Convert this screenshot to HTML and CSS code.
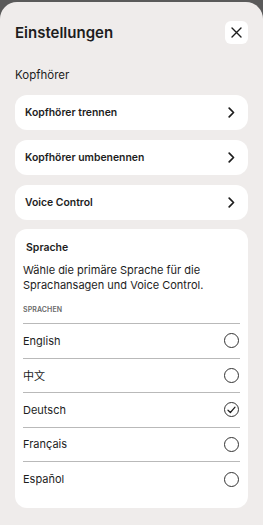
FILE: index.html
```html
<!DOCTYPE html>
<html lang="de">
<head>
<meta charset="utf-8">
<link rel="stylesheet" href="styles.css">
</head>
<body>
<div class="sheet">
  <header class="header">
    <h1 class="title">Einstellungen</h1>
    <button class="close" aria-label="Schließen">
      <svg width="11" height="11" viewBox="0 0 11 11"><path d="M1 1L10 10M10 1L1 10" stroke="#1d1d1d" stroke-width="1.4" stroke-linecap="round"/></svg>
    </button>
  </header>
  <h2 class="section">Kopfhörer</h2>
  <div class="menu">
    <div class="item"><span>Kopfhörer trennen</span><svg class="chev" width="7" height="11" viewBox="0 0 7 11"><path d="M1.2 1.2L5.5 5.5L1.2 9.8" fill="none" stroke="#1d1d1d" stroke-width="1.7" stroke-linecap="round" stroke-linejoin="round"/></svg></div>
    <div class="item"><span>Kopfhörer umbenennen</span><svg class="chev" width="7" height="11" viewBox="0 0 7 11"><path d="M1.2 1.2L5.5 5.5L1.2 9.8" fill="none" stroke="#1d1d1d" stroke-width="1.7" stroke-linecap="round" stroke-linejoin="round"/></svg></div>
    <div class="item"><span>Voice Control</span><svg class="chev" width="7" height="11" viewBox="0 0 7 11"><path d="M1.2 1.2L5.5 5.5L1.2 9.8" fill="none" stroke="#1d1d1d" stroke-width="1.7" stroke-linecap="round" stroke-linejoin="round"/></svg></div>
  </div>
  <div class="lang-card">
    <h3 class="lang-title">Sprache</h3>
    <p class="desc">Wähle die primäre Sprache für die Sprachansagen und Voice Control.</p>
    <div class="caption">SPRACHEN</div>
    <ul class="langs">
      <li class="lang"><span>English</span><span class="radio"></span></li>
      <li class="lang"><span class="cjk">中文</span><span class="radio"></span></li>
      <li class="lang"><span>Deutsch</span><span class="radio checked"><svg width="9" height="8" viewBox="0 0 9 8"><path d="M1 4.2L3.4 6.5L8 1.2" fill="none" stroke="#1d1d1d" stroke-width="1.2" stroke-linecap="round" stroke-linejoin="round"/></svg></span></li>
      <li class="lang"><span>Français</span><span class="radio"></span></li>
      <li class="lang"><span>Español</span><span class="radio"></span></li>
    </ul>
  </div>
</div>
</body>
</html>
```
FILE: styles.css
```css
* { box-sizing: border-box; }
html, body { margin: 0; padding: 0; }
body {
  background: #5a5a5a;
  font-family: Inter, "Noto Sans", sans-serif;
  color: #1d1d1d;
  width: 263px;
  height: 525px;
  overflow: hidden;
}
.sheet {
  margin-top: 2px;
  background: #efeceb;
  border-radius: 17px 17px 0 0;
  height: 523px;
  padding: 19px 15px 0 15px;
  display: flex;
  flex-direction: column;
}
.header {
  display: flex;
  align-items: center;
  justify-content: space-between;
  height: 23px;
}
.title {
  margin: 0;
  font-size: 15px;
  font-weight: 600;
  letter-spacing: 0;
}
.close {
  width: 23px;
  height: 23px;
  border: none;
  border-radius: 6px;
  background: #fff;
  padding: 0;
  display: flex;
  align-items: center;
  justify-content: center;
}
.section {
  margin: 24px 0 0 0;
  font-size: 11.5px;
  font-weight: 400;
  line-height: 14px;
}
.menu {
  margin-top: 13px;
  display: flex;
  flex-direction: column;
  gap: 10px;
}
.item {
  height: 35px;
  background: #fff;
  border-radius: 12px;
  display: flex;
  align-items: center;
  justify-content: space-between;
  padding: 0 13px 0 10px;
  font-size: 10.4px;
  font-weight: 600;
}
.lang-card {
  margin-top: 9px;
  background: #fff;
  border-radius: 12px;
  padding: 12px 8px 11px 8px;
}
.lang-title {
  margin: 0 0 0 3px;
  font-size: 10.5px;
  font-weight: 600;
  line-height: 14px;
}
.desc {
  margin: 8px 0 0 0;
  font-size: 11px;
  line-height: 15px;
  font-weight: 400;
}
.caption {
  margin-top: 12px;
  font-size: 7px;
  font-weight: 600;
  color: #6a6a6a;
  letter-spacing: 0.1px;
  line-height: 10px;
}
.langs {
  list-style: none;
  margin: 8px 0 0 0;
  padding: 0;
  border-top: 1px solid #b9b9b9;
}
.lang {
  height: 34.5px;
  display: flex;
  align-items: center;
  justify-content: space-between;
  font-size: 11px;
  padding-right: 1px;
  border-bottom: 1px solid #b9b9b9;
}
.lang:last-child { border-bottom: none; }
.cjk { font-family: "Noto Sans CJK SC", sans-serif; }
.radio {
  width: 15px;
  height: 15px;
  border: 1px solid #333;
  border-radius: 50%;
  display: flex;
  align-items: center;
  justify-content: center;
}
```
